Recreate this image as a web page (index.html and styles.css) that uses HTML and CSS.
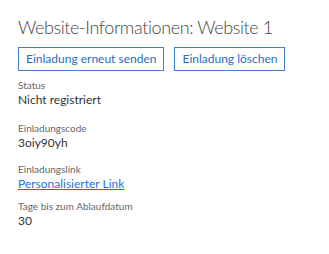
FILE: index.html
```html
<!DOCTYPE html>
<html lang="de">
<head>
    <meta charset="UTF-8">
    <meta name="viewport" content="width=device-width, initial-scale=1.0">
    <title>Website-Informationen</title>
    <link rel="stylesheet" href="styles.css">
</head>
<body>

<div class="panel">
    <h1>Website-Informationen: Website 1</h1>

    <div class="actions">
        <button type="button" class="action-btn">Einladung erneut senden</button>
        <button type="button" class="action-btn">Einladung löschen</button>
    </div>

    <div class="field">
        <div class="field-label">Status</div>
        <div class="field-value">Nicht registriert</div>
    </div>

    <div class="field field-code">
        <div class="field-label">Einladungscode</div>
        <div class="field-value">3oiy90yh</div>
    </div>

    <div class="field field-link">
        <div class="field-label">Einladungslink</div>
        <div class="field-value"><a href="#">Personalisierter Link</a></div>
    </div>

    <div class="field">
        <div class="field-label">Tage bis zum Ablaufdatum</div>
        <div class="field-value">30</div>
    </div>
</div>

</body>
</html>
```

FILE: styles.css
```css
body {
    font-family: Lato, 'Open Sans', sans-serif;
    background-color: #ffffff;
    color: #333;
    margin: 0;
}
.panel {
    padding: 15px 18px 0 18px;
}
h1 {
    font-size: 18px;
    font-weight: 300;
    letter-spacing: -0.4px;
    line-height: 24px;
    color: #444;
    margin: 0 0 8px 0;
}
.actions {
    display: flex;
    gap: 10px;
    margin-bottom: 8px;
}
/* outlined buttons */
.action-btn {
    font-family: inherit;
    font-size: 12px;
    height: 24px;
    line-height: 22px;
    padding: 0 7px;
    background-color: #fff;
    color: #2a6ebd;
    border: 1px solid #3f81d1;
    border-radius: 0;
}
.field {
    margin-bottom: 15px;
}
.field-code {
    margin-bottom: 13px;
}
.field-link {
    margin-bottom: 9px;
}
.field-label {
    font-size: 10px;
    line-height: 13px;
    color: #666;
}
.field-value {
    font-size: 12px;
    line-height: 15px;
    color: #333;
}
.field-value a {
    color: #1e74d6;
    text-decoration: underline;
}
```
